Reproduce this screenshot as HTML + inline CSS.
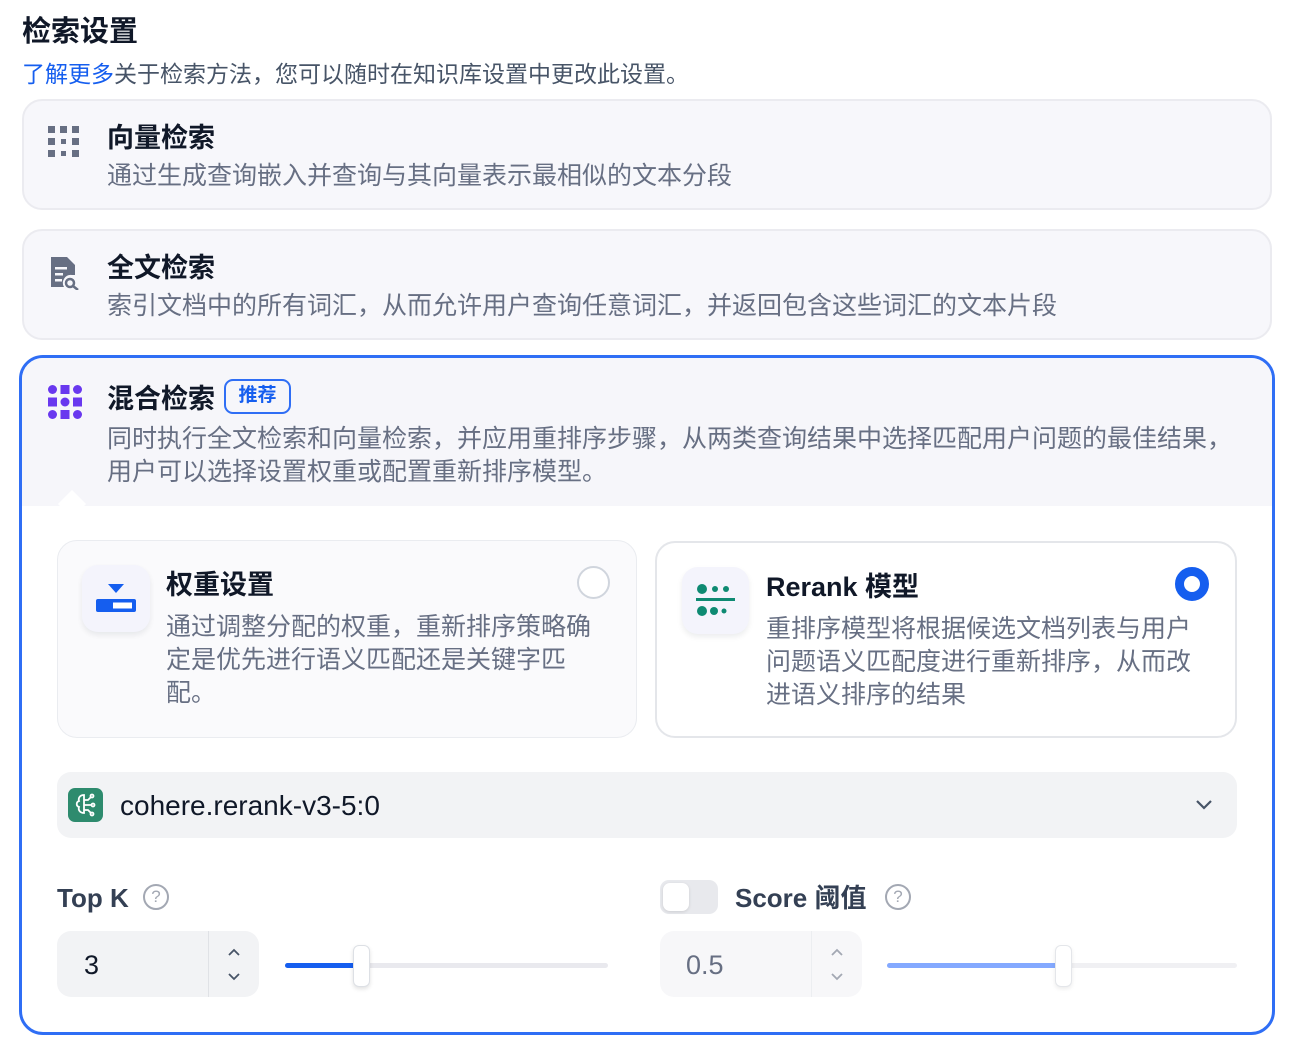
<!DOCTYPE html>
<html><head><meta charset="utf-8"><style>
*{box-sizing:border-box;margin:0;padding:0}
body{width:1293px;height:1060px;background:#fff;font-family:"Liberation Sans","Noto Sans CJK SC",sans-serif;color:#1d2939;position:relative;overflow:hidden}
.a{position:absolute}
.t{font-size:27px;font-weight:700;color:#101828;line-height:36px}
.d{font-size:25px;color:#676f83;line-height:33px;white-space:nowrap}
.card{position:absolute;left:22px;width:1250px;height:111px;border:2px solid #ebebf0;border-radius:20px;background:#f7f7fb}
</style></head><body>
<div class="a" style="left:22px;top:14px;font-size:29px;font-weight:700;color:#101828;line-height:36px">检索设置</div>
<div class="a d" style="left:22px;top:58px;font-size:23px;color:#475467"><span style="color:#155eef">了解更多</span>关于检索方法，您可以随时在知识库设置中更改此设置。</div>

<div class="card" style="top:99px"></div>
<svg class="a" style="left:48px;top:126px" width="33" height="32" viewBox="0 0 33 32" fill="#676f83">
<rect x="0" y="0" width="7" height="7"/><rect x="12" y="0" width="7" height="7"/><rect x="24" y="0" width="7" height="7"/>
<rect x="0" y="12" width="7" height="7"/><rect x="13" y="13" width="5" height="5"/><rect x="24" y="12" width="7" height="7"/>
<rect x="0" y="24" width="7" height="7"/><rect x="13" y="25" width="5" height="5"/><rect x="24" y="24" width="7" height="7"/></svg>
<div class="a t" style="left:107px;top:120px">向量检索</div>
<div class="a d" style="left:107px;top:160px">通过生成查询嵌入并查询与其向量表示最相似的文本分段</div>

<div class="card" style="top:229px"></div>
<svg class="a" style="left:50px;top:256px" width="32" height="34" viewBox="0 0 32 34" fill="#676f83">
<path d="M1 1h16l8 8v10h-3a8 8 0 0 0-8 12H1z"/><circle cx="20" cy="27" r="4" fill="none" stroke="#676f83" stroke-width="2.5"/><path d="M23 30l5 4" stroke="#676f83" stroke-width="2.5"/>
<rect x="5" y="11" width="12" height="2.5" fill="#f7f7fb"/><rect x="5" y="17" width="8" height="2.5" fill="#f7f7fb"/><rect x="5" y="23" width="7" height="2.5" fill="#f7f7fb"/></svg>
<div class="a t" style="left:107px;top:250px">全文检索</div>
<div class="a d" style="left:107px;top:290px">索引文档中的所有词汇，从而允许用户查询任意词汇，并返回包含这些词汇的文本片段</div>

<div class="a" style="left:19px;top:355px;width:1256px;height:680px;border:3px solid #2f6ef5;border-radius:24px;overflow:hidden;background:#fff">
<div class="a" style="left:0;top:0;width:1256px;height:148px;background:#f6f6fa"></div>
<div class="a" style="left:40px;top:136px;width:20px;height:20px;background:#fff;transform:rotate(45deg)"></div>
</div>
<svg class="a" style="left:48px;top:385px" width="34" height="34" viewBox="0 0 34 34" fill="#6938ef">
<circle cx="4.5" cy="4.5" r="4.5"/><rect x="12.5" y="0" width="9" height="9"/><circle cx="29.5" cy="4.5" r="4.5"/>
<rect x="0" y="12.5" width="9" height="9"/><circle cx="17" cy="17" r="4.5"/><rect x="25" y="12.5" width="9" height="9"/>
<circle cx="4.5" cy="29.5" r="4.5"/><rect x="12.5" y="25" width="9" height="9"/><circle cx="29.5" cy="29.5" r="4.5"/></svg>
<div class="a t" style="left:107px;top:381px">混合检索</div>
<div class="a" style="left:224px;top:379px;width:67px;height:35px;border:2px solid #2f6ef5;border-radius:9px;color:#155eef;font-size:19px;font-weight:700;text-align:center;line-height:30px">推荐</div>
<div class="a d" style="left:107px;top:423px">同时执行全文检索和向量检索，并应用重排序步骤，从两类查询结果中选择匹配用户问题的最佳结果，</div>
<div class="a d" style="left:107px;top:456px">用户可以选择设置权重或配置重新排序模型。</div>

<div class="a" style="left:57px;top:540px;width:580px;height:198px;border:1.5px solid #eaecf0;border-radius:20px;background:#fafafc"></div>
<div class="a" style="left:82px;top:565px;width:68px;height:67px;border-radius:16px;background:#f4f4fc;box-shadow:0 3px 6px rgba(16,24,40,.08)"></div>
<svg class="a" style="left:96px;top:583px" width="40" height="32" viewBox="0 0 40 32"><path d="M12 1h16l-8 9z" fill="#155eef"/><rect x="0" y="16" width="40" height="13" rx="2" fill="#155eef"/><rect x="17" y="19.5" width="19" height="6" fill="#fff"/></svg>
<div class="a t" style="left:166px;top:567px">权重设置</div>
<div class="a d" style="left:166px;top:611px">通过调整分配的权重，重新排序策略确</div>
<div class="a d" style="left:166px;top:644px">定是优先进行语义匹配还是关键字匹</div>
<div class="a d" style="left:166px;top:677px">配。</div>
<div class="a" style="left:577px;top:566px;width:33px;height:33px;border:2px solid #d0d5dd;border-radius:50%;background:#fff"></div>

<div class="a" style="left:655px;top:541px;width:582px;height:197px;border:2.5px solid #e4e6ea;border-radius:20px;background:#fff"></div>
<div class="a" style="left:682px;top:567px;width:67px;height:67px;border-radius:16px;background:#f4f4fc;box-shadow:0 3px 6px rgba(16,24,40,.08)"></div>
<svg class="a" style="left:696px;top:583px" width="40" height="36" viewBox="0 0 40 36" fill="#0e8a72"><circle cx="6" cy="6" r="5"/><circle cx="19" cy="6" r="3"/><circle cx="30" cy="6" r="3"/><rect x="0" y="15" width="39" height="3"/><circle cx="6" cy="28" r="5"/><circle cx="18" cy="28" r="4"/><circle cx="28" cy="28" r="2.5"/></svg>
<div class="a t" style="left:766px;top:569px">Rerank 模型</div>
<div class="a d" style="left:766px;top:613px">重排序模型将根据候选文档列表与用户</div>
<div class="a d" style="left:766px;top:646px">问题语义匹配度进行重新排序，从而改</div>
<div class="a d" style="left:766px;top:679px">进语义排序的结果</div>
<div class="a" style="left:1175px;top:567px;width:34px;height:34px;border:9px solid #155eef;border-radius:50%;background:#fff"></div>

<div class="a" style="left:57px;top:772px;width:1180px;height:66px;border-radius:14px;background:#f2f3f5"></div>
<div class="a" style="left:68px;top:788px;width:35px;height:34px;border-radius:7px;background:#2e8b6e"></div>
<svg class="a" style="left:73px;top:792px" width="25" height="26" viewBox="0 0 25 26" fill="none" stroke="#fff" stroke-width="1.8"><path d="M11 3c-4 0-6 3-5 6-3 1-3 5 0 6-1 3 1 6 5 6zM11 8h4l3-3M11 13h7M11 18h4l3 3"/><circle cx="19" cy="4" r="1.5"/><circle cx="20" cy="13" r="1.5"/><circle cx="19" cy="22" r="1.5"/></svg>
<div class="a" style="left:120px;top:789px;font-size:28px;color:#101828;line-height:34px">cohere.rerank-v3-5:0</div>
<svg class="a" style="left:1195px;top:799px" width="18" height="12" viewBox="0 0 18 12"><path d="M2 2l7 7 7-7" fill="none" stroke="#475467" stroke-width="2.2"/></svg>

<div class="a" style="left:57px;top:881px;font-size:26px;font-weight:700;color:#344054;line-height:34px">Top K</div>
<div class="a" style="left:143px;top:884px;width:26px;height:26px;border:2px solid #a3a8b3;border-radius:50%;color:#a3a8b3;font-size:17px;text-align:center;line-height:22px">?</div>
<div class="a" style="left:57px;top:931px;width:202px;height:66px;border-radius:14px;background:#f2f3f5"></div>
<div class="a" style="left:208px;top:931px;width:1px;height:66px;background:#e0e2e6"></div>
<div class="a" style="left:84px;top:948px;font-size:27px;color:#101828;line-height:34px">3</div>
<svg class="a" style="left:226px;top:945px" width="16" height="40" viewBox="0 0 16 40" fill="none" stroke="#475467" stroke-width="1.8"><path d="M3 10l5-5 5 5M3 29l5 5 5-5"/></svg>
<div class="a" style="left:285px;top:963px;width:323px;height:5px;border-radius:3px;background:#e9e9ee"></div>
<div class="a" style="left:285px;top:963px;width:72px;height:5px;border-radius:3px;background:#155eef"></div>
<div class="a" style="left:353px;top:945px;width:17px;height:42px;border-radius:6px;background:#fff;border:1px solid #dde0e5;box-shadow:0 2px 4px rgba(0,0,0,.12)"></div>

<div class="a" style="left:660px;top:880px;width:58px;height:34px;border-radius:9px;background:#e8e9ed"></div>
<div class="a" style="left:663px;top:883px;width:26px;height:28px;border-radius:7px;background:#fff;box-shadow:0 1px 3px rgba(0,0,0,.12)"></div>
<div class="a" style="left:735px;top:881px;font-size:26px;font-weight:700;color:#344054;line-height:34px">Score 阈值</div>
<div class="a" style="left:885px;top:884px;width:26px;height:26px;border:2px solid #a3a8b3;border-radius:50%;color:#a3a8b3;font-size:17px;text-align:center;line-height:22px">?</div>
<div class="a" style="left:660px;top:931px;width:202px;height:66px;border-radius:14px;background:#f7f7f9"></div>
<div class="a" style="left:811px;top:931px;width:1px;height:66px;background:#eceef1"></div>
<div class="a" style="left:686px;top:948px;font-size:27px;color:#676f83;line-height:34px">0.5</div>
<svg class="a" style="left:829px;top:945px" width="16" height="40" viewBox="0 0 16 40" fill="none" stroke="#a3a8b3" stroke-width="1.8"><path d="M3 10l5-5 5 5M3 29l5 5 5-5"/></svg>
<div class="a" style="left:887px;top:963px;width:350px;height:5px;border-radius:3px;background:#f0f0f3"></div>
<div class="a" style="left:887px;top:963px;width:172px;height:5px;border-radius:3px;background:#84a9ff"></div>
<div class="a" style="left:1055px;top:945px;width:17px;height:42px;border-radius:6px;background:#fff;border:1px solid #e4e6ea;box-shadow:0 2px 4px rgba(0,0,0,.08)"></div>
</body></html>
